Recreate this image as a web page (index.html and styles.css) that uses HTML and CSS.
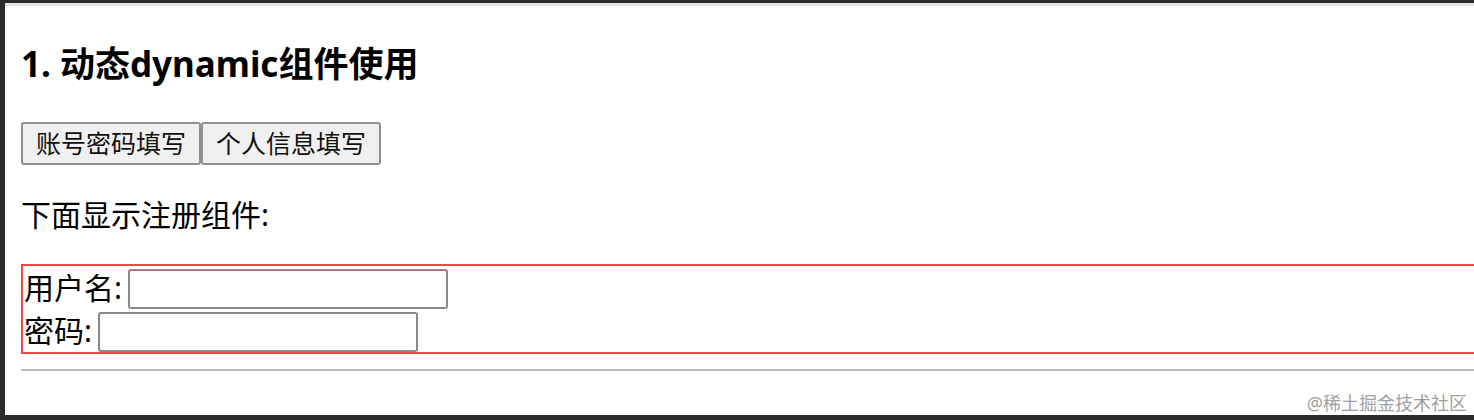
FILE: index.html
```html
<!DOCTYPE html>
<html lang="zh-CN">
<head>
  <meta charset="UTF-8" />
  <meta name="viewport" content="width=device-width, initial-scale=1.0"/>
  <title>动态dynamic组件使用</title>
  <link rel="stylesheet" href="styles.css">
</head>
<body>
  <div class="frame">
    <div class="page">
      <h3>1. 动态dynamic组件使用</h3>

      <div class="tabs">
        <button type="button">账号密码填写</button>
        <button type="button">个人信息填写</button>
      </div>

      <p class="tip">下面显示注册组件:</p>

      <div class="register">
        <div class="row">
          <label for="username">用户名:</label>
          <input type="text" id="username" />
        </div>
        <div class="row">
          <label for="password">密码:</label>
          <input type="password" id="password" />
        </div>
      </div>

      <hr />
    </div>

    <div class="watermark">@稀土掘金技术社区</div>
  </div>
</body>
</html>
```

FILE: styles.css
```css
* {
  box-sizing: border-box;
}
body {
  margin: 0;
  background: #2b2b2b;
  font-family: "Noto Sans", "Noto Sans CJK SC", sans-serif;
  color: #000;
}
.frame {
  position: relative;
  height: 420px;
  overflow: hidden;
  border-top: 3px solid #2b2b2b;
  border-left: 5px solid #2b2b2b;
  border-bottom: 5px solid #2b2b2b;
  background: #fff;
}
.page {
  width: 1560px;
  padding-left: 16px;
  border-top: 3px solid #e4e4e4;
}
h3 {
  margin: 35px 0;
  font-size: 35px;
  line-height: 46px;
  font-weight: 700;
}
.tabs {
  display: flex;
}
.tabs button {
  font-family: inherit;
  font-size: 25px;
  line-height: 35px;
  padding: 2px 13px;
  color: #111;
  background-color: #f0f0f0;
  border: 2px solid #909090;
  border-radius: 3px;
}
.tip {
  margin: 30px 0;
  font-size: 30px;
  line-height: 39px;
}
.register {
  width: 1480px;
  border: 2px solid #f04848;
  padding-left: 1px;
}
.row {
  display: flex;
  align-items: flex-end;
  height: 43px;
  font-size: 30px;
}
.row label {
  margin-right: 6px;
  line-height: 42px;
}
.row input {
  width: 320px;
  height: 40px;
  border: 2px solid #8a8a8a;
  border-radius: 3px;
  background: #fff;
}
hr {
  margin: 15px 0 0;
  border: none;
  border-top: 2px solid #bdbdbd;
}
.watermark {
  position: absolute;
  right: 7px;
  bottom: 0;
  font-size: 18px;
  line-height: 24px;
  color: #a0a0a0;
}
```
